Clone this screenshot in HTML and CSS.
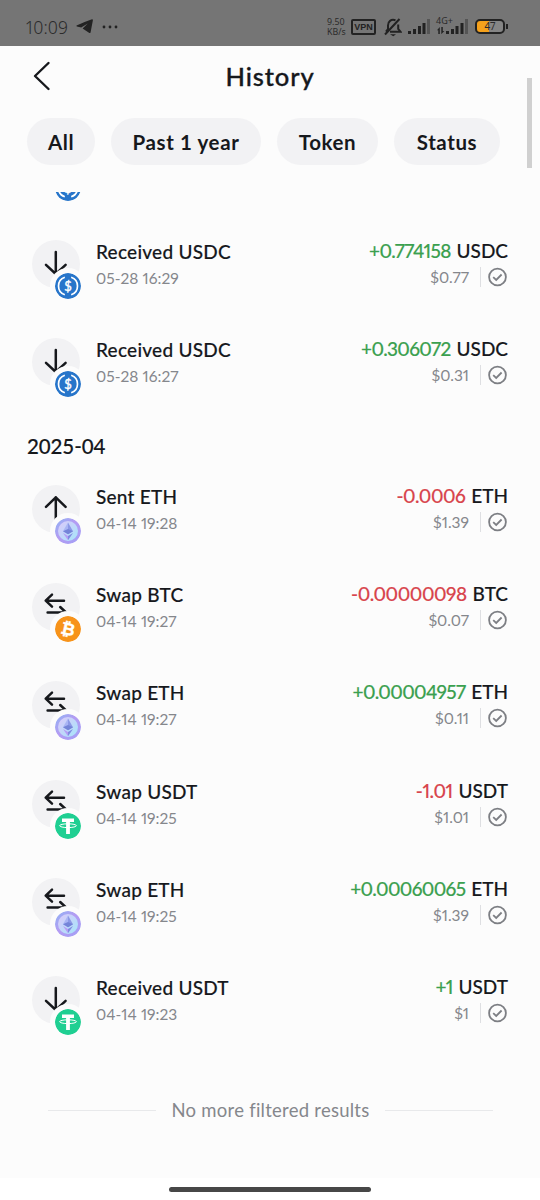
FILE: index.html
```
<!DOCTYPE html>
<html lang="en">
<head>
    <meta charset="UTF-8">
    <meta name="viewport" content="width=device-width, initial-scale=1.0">
    <title>History</title>
    <link rel="stylesheet" href="styles.css">
</head>
<body>

    <!-- Shared icons -->
    <svg class="sprite" width="0" height="0">
        <defs>
            <linearGradient id="ethRing" x1="0" y1="0" x2="1" y2="1">
                <stop offset="0" stop-color="#8fb4f4"/>
                <stop offset="0.45" stop-color="#b49cf3"/>
                <stop offset="1" stop-color="#a2a0f5"/>
            </linearGradient>
            <linearGradient id="ethFill" x1="0" y1="0" x2="1" y2="1">
                <stop offset="0" stop-color="#dcc8fa"/>
                <stop offset="1" stop-color="#a5e6fa"/>
            </linearGradient>
        </defs>
        <symbol id="receive" viewBox="0 0 48 48"><path d="M23.8 12v21.5M14 24.8l9.8 9.2 9.8-9.2"/></symbol>
        <symbol id="send" viewBox="0 0 48 48"><path d="M23.8 36V12.2M14 21.8l9.8-9.4 9.8 9.4"/></symbol>
        <symbol id="swap" viewBox="0 0 48 48"><path d="M32 17.7H13.8M20 11.7l-6.3 6 6.3 6M15.6 29.5H34L28.2 24"/></symbol>
        <symbol id="usdc" viewBox="0 0 26 26">
            <circle cx="13" cy="13" r="13" fill="#2775ca"/>
            <path d="M9.8 4.2a9.3 9.3 0 0 0 0 17.6M16.2 4.2a9.3 9.3 0 0 1 0 17.6" fill="none" stroke="#fff" stroke-width="1.7"/>
            <text x="13" y="17.6" class="coin-sign">$</text>
        </symbol>
        <symbol id="eth" viewBox="0 0 26 26">
            <circle cx="13" cy="13" r="13" fill="url(#ethRing)"/>
            <circle cx="13" cy="13" r="10" fill="url(#ethFill)"/>
            <path d="M13 4.5l-5 8.7 5 3z" fill="#a9b4f4"/>
            <path d="M13 4.5l5 8.7-5 3z" fill="#8c98e6"/>
            <path d="M8 13.2l5-2.2 5 2.2-5 3z" fill="#7484d8"/>
            <path d="M8 15l5 3v4.2z" fill="#b59df4"/>
            <path d="M18 15l-5 3v4.2z" fill="#7f8ae0"/>
        </symbol>
        <symbol id="btc" viewBox="0 0 26 26">
            <circle cx="13" cy="13" r="13" fill="#f7931a"/>
            <text x="13" y="19" class="coin-sign coin-btc" transform="rotate(13 13 13)">₿</text>
        </symbol>
        <symbol id="usdt" viewBox="0 0 26 26">
            <circle cx="13" cy="13" r="13" fill="#1fcf92"/>
            <path d="M7 5.6h12v3.5h-4.1v12h-3.8V9.1H7z" fill="#fff"/>
            <ellipse cx="13" cy="12.7" rx="8.4" ry="1.9" fill="none" stroke="#fff" stroke-width="1"/>
        </symbol>
        <symbol id="done" viewBox="0 0 20 20"><circle cx="10" cy="10" r="8.4"/><path d="M5.7 10.2l3 2.8 5.4-5.5"/></symbol>
    </svg>

    <div class="statusbar">
        <span class="clock">10:09</span>
        <svg class="telegram" width="18" height="15" viewBox="0 0 18 15"><path d="M0.6 6.6Q8 3 16 0.3Q17 0.2 16.9 1.2L14.6 13.2Q14.2 14.5 13 13.8L6.6 9.6 11.8 4.4 5.2 8.4 0.9 7.5Q0 7.1 0.6 6.6z"/></svg>
        <svg class="dots" width="16" height="4" viewBox="0 0 16 4"><circle cx="2" cy="2" r="1.4"/><circle cx="8" cy="2" r="1.4"/><circle cx="14" cy="2" r="1.4"/></svg>
        <div class="indicators">
            <div class="speed"><span>9.50</span><span>KB/s</span></div>
            <span class="vpn">VPN</span>
            <svg class="bell" width="18" height="20" viewBox="0 0 18 20">
                <path d="M11.5 3.3C7 1.8 4 4.5 4 8.5V12l-2 2.7M6 14.7h10.5L14.2 12V7.5M1 17.5L15.5 2" fill="none" stroke="#222" stroke-width="2"/>
                <path d="M6 17.2h6l-2.7 2z"/>
            </svg>
            <svg width="22" height="15" viewBox="0 0 22 15">
                <path d="M0 12h3v3H0zM5 10h3v5H5zM10 7h3v8h-3zM14.5 4h3v11h-3z"/><path class="faint" d="M19 0h3v15h-3z"/>
            </svg>
            <div class="network">
                <span class="net-label">4G+</span>
                <svg width="31" height="15" viewBox="0 0 31 15">
                    <path d="M0 11.2L2.8 8v7H1.3v-3.8zM4.3 8h1.5v4h1.5L4.3 15.2zM9 12h3v3H9zM14 10h3v5h-3zM18.5 7h3v8h-3zM23.5 4h3v11h-3z"/><path class="faint" d="M28 0h3v15h-3z"/>
                </svg>
            </div>
            <div class="battery"><span>47</span></div>
        </div>
    </div>

    <header class="header">
        <svg class="back" width="18" height="30" viewBox="0 0 18 30"><path d="M15.5 2L2 15 15.5 28"/></svg>
        <h1>History</h1>
    </header>

    <nav class="filters">
        <button class="chip chip-all">All</button>
        <button class="chip chip-period">Past 1 year</button>
        <button class="chip chip-token">Token</button>
        <button class="chip chip-status">Status</button>
    </nav>
    <div class="scrollbar"></div>

    <main class="list">
        <!-- Scrolled under the filters -->
        <div class="row row-cut">
            <div class="icon"><svg class="coin"><use href="#usdc"/></svg></div>
        </div>
        <div class="row">
            <div class="icon"><svg class="action"><use href="#receive"/></svg><svg class="coin"><use href="#usdc"/></svg></div>
            <div class="info"><div class="name">Received USDC</div><div class="date">05-28 16:29</div></div>
            <div class="amount"><div class="value"><span class="plus">+0.774158</span> USDC</div><div class="fiat">$0.77<svg class="done"><use href="#done"/></svg></div></div>
        </div>
        <div class="row">
            <div class="icon"><svg class="action"><use href="#receive"/></svg><svg class="coin"><use href="#usdc"/></svg></div>
            <div class="info"><div class="name">Received USDC</div><div class="date">05-28 16:27</div></div>
            <div class="amount"><div class="value"><span class="plus">+0.306072</span> USDC</div><div class="fiat">$0.31<svg class="done"><use href="#done"/></svg></div></div>
        </div>

        <h2 class="month">2025-04</h2>

        <div class="row">
            <div class="icon"><svg class="action"><use href="#send"/></svg><svg class="coin"><use href="#eth"/></svg></div>
            <div class="info"><div class="name">Sent ETH</div><div class="date">04-14 19:28</div></div>
            <div class="amount"><div class="value"><span class="minus">-0.0006</span> ETH</div><div class="fiat">$1.39<svg class="done"><use href="#done"/></svg></div></div>
        </div>
        <div class="row">
            <div class="icon"><svg class="action"><use href="#swap"/></svg><svg class="coin"><use href="#btc"/></svg></div>
            <div class="info"><div class="name">Swap BTC</div><div class="date">04-14 19:27</div></div>
            <div class="amount"><div class="value"><span class="minus">-0.00000098</span> BTC</div><div class="fiat">$0.07<svg class="done"><use href="#done"/></svg></div></div>
        </div>
        <div class="row">
            <div class="icon"><svg class="action"><use href="#swap"/></svg><svg class="coin"><use href="#eth"/></svg></div>
            <div class="info"><div class="name">Swap ETH</div><div class="date">04-14 19:27</div></div>
            <div class="amount"><div class="value"><span class="plus">+0.00004957</span> ETH</div><div class="fiat">$0.11<svg class="done"><use href="#done"/></svg></div></div>
        </div>
        <div class="row">
            <div class="icon"><svg class="action"><use href="#swap"/></svg><svg class="coin"><use href="#usdt"/></svg></div>
            <div class="info"><div class="name">Swap USDT</div><div class="date">04-14 19:25</div></div>
            <div class="amount"><div class="value"><span class="minus">-1.01</span> USDT</div><div class="fiat">$1.01<svg class="done"><use href="#done"/></svg></div></div>
        </div>
        <div class="row">
            <div class="icon"><svg class="action"><use href="#swap"/></svg><svg class="coin"><use href="#eth"/></svg></div>
            <div class="info"><div class="name">Swap ETH</div><div class="date">04-14 19:25</div></div>
            <div class="amount"><div class="value"><span class="plus">+0.00060065</span> ETH</div><div class="fiat">$1.39<svg class="done"><use href="#done"/></svg></div></div>
        </div>
        <div class="row">
            <div class="icon"><svg class="action"><use href="#receive"/></svg><svg class="coin"><use href="#usdt"/></svg></div>
            <div class="info"><div class="name">Received USDT</div><div class="date">04-14 19:23</div></div>
            <div class="amount"><div class="value"><span class="plus">+1</span> USDT</div><div class="fiat">$1<svg class="done"><use href="#done"/></svg></div></div>
        </div>

        <div class="end">No more filtered results</div>
    </main>

    <footer class="gesture"><span></span></footer>

</body>
</html>
```
FILE: styles.css
```
* {
    box-sizing: border-box;
}

body {
    margin: 0;
    width: 540px;
    height: 1200px;
    display: flex;
    flex-direction: column;
    background-color: #fcfcfc;
    color: #16181c;
    font-family: Lato, "Liberation Sans", sans-serif;
    font-variant-numeric: proportional-nums;
    position: relative;
    overflow: hidden;
}

.sprite {
    position: absolute;
}

/* System status bar */
.statusbar {
    height: 46px;
    flex: none;
    display: flex;
    align-items: center;
    padding: 7px 34px 0 26px;
    background-color: #757575;
    color: #2b2b2b;
    fill: #222;
    font-family: "Noto Sans", sans-serif;
}

.clock {
    font-size: 17.5px;
    font-weight: 300;
    width: 50px;
    letter-spacing: 0.1px;
}

.dots {
    margin-left: 8px;
}

.indicators {
    display: flex;
    align-items: center;
    margin-left: auto;
}

.speed {
    display: flex;
    flex-direction: column;
    font-size: 8.8px;
    line-height: 10px;
    width: 24px;
}

.vpn {
    width: 25px;
    height: 16px;
    border: 2px solid #222;
    border-radius: 2px;
    font: bold 9px/12px "Liberation Sans", sans-serif;
    text-align: center;
    color: #222;
}

.bell {
    margin: 0 6px 0 8px;
}

.faint {
    fill: #555;
}

.network {
    position: relative;
    height: 15px;
    margin-left: 7px;
    display: flex;
}

.net-label {
    position: absolute;
    left: -1px;
    top: -3px;
    font-size: 9px;
    line-height: 10px;
}

.battery {
    width: 30px;
    height: 15px;
    margin: 0 1px 0 7px;
    border: 2px solid #222;
    border-radius: 5px;
    background: linear-gradient(90deg, #f5a11c 45%, #858585 45%);
    font-size: 10px;
    line-height: 11px;
    text-align: center;
    position: relative;
}

.battery::after {
    content: "";
    position: absolute;
    right: -5px;
    top: 3px;
    width: 2px;
    height: 5px;
    background-color: #222;
}

/* Header and filters */
.header {
    height: 72px;
    flex: none;
    display: flex;
    align-items: center;
    padding: 0 33px 13px;
}

.back {
    fill: none;
    stroke: #16181c;
    stroke-width: 2.4;
    stroke-linecap: round;
    stroke-linejoin: round;
}

h1 {
    margin: 0;
    flex: 1;
    padding-right: 18px;
    text-align: center;
    font-size: 25.5px;
    line-height: 30px;
    font-weight: 500;
    letter-spacing: 0.9px;
    -webkit-text-stroke: 0.35px;
}

.filters {
    height: 74px;
    flex: none;
    display: flex;
    align-items: flex-start;
    gap: 16px;
    padding-left: 27px;
}

.chip {
    height: 47px;
    border: none;
    border-radius: 24px;
    padding: 0;
    background-color: #f2f2f4;
    color: #16181c;
    font: bold 20.5px Lato, sans-serif;
    letter-spacing: 0.6px;
}

.chip-all {
    width: 68px;
}

.chip-period {
    width: 150px;
}

.chip-token {
    width: 101px;
}

.chip-status {
    width: 106px;
}

.scrollbar {
    position: absolute;
    left: 527px;
    top: 78px;
    width: 5px;
    height: 90px;
    background-color: #d0d0d0;
}

/* Transactions */
.list {
    flex: 1;
    overflow: hidden;
}

.row {
    height: 98.2px;
    display: flex;
    padding: 0 32px;
}

.row-cut {
    margin-top: -50.2px;
}

.icon {
    position: relative;
    width: 48px;
    height: 48px;
    border-radius: 50%;
    background-color: #f2f2f4;
}

.row-cut .icon {
    background: none;
}

.action {
    display: block;
    width: 48px;
    height: 48px;
    fill: none;
    stroke: #16181c;
    stroke-width: 2.5;
    stroke-linecap: round;
    stroke-linejoin: round;
}

.coin {
    position: absolute;
    left: 18px;
    top: 28px;
    width: 36px;
    height: 36px;
    padding: 5px;
    border-radius: 50%;
    background-color: #fcfcfc;
}

.coin-sign {
    font: 13px Lato, sans-serif;
    fill: #fff;
    stroke: #fff;
    stroke-width: 0.4;
    text-anchor: middle;
}

.coin-btc {
    font: bold 17px "DejaVu Sans", sans-serif;
}

.info {
    margin-top: -1px;
    margin-left: 16px;
}

.name,
.value {
    font-size: 19px;
    line-height: 25px;
    font-weight: 500;
    letter-spacing: 0.25px;
    white-space: nowrap;
    -webkit-text-stroke: 0.15px;
}

.date,
.fiat {
    font-size: 15.5px;
    line-height: 20px;
    color: #85878c;
}

.date {
    margin-top: 4px;
    letter-spacing: 0.05px;
}

.amount {
    margin-left: auto;
    margin-top: -2px;
    text-align: right;
}

.value {
    letter-spacing: 0;
}

.plus {
    color: #3ba04f;
    letter-spacing: -0.65px;
    margin-right: 1px;
}

.minus {
    color: #d8444c;
    letter-spacing: -0.45px;
    margin-right: 1px;
}

.fiat {
    display: flex;
    justify-content: flex-end;
    align-items: center;
    margin-top: 4px;
}

.done {
    width: 28px;
    height: 20px;
    margin-left: 11px;
    padding-left: 6px;
    border-left: 1px solid #dedfe2;
    fill: none;
    stroke: #7d7f84;
    stroke-width: 1.8;
}

.month {
    height: 48.6px;
    margin: 0;
    padding-left: 27px;
    font-size: 20.5px;
    line-height: 21px;
    font-weight: 500;
    font-variant-numeric: tabular-nums;
    letter-spacing: -0.1px;
    -webkit-text-stroke: 0.15px;
}

.end {
    display: flex;
    align-items: center;
    gap: 16px;
    margin: 24px 47px 0 48px;
    font-size: 18.5px;
    line-height: 24px;
    letter-spacing: 0.25px;
    color: #85878c;
}

.end::before,
.end::after {
    content: "";
    flex: 1;
    height: 1px;
    background-color: #e8e9eb;
}

/* Gesture bar */
.gesture {
    height: 22px;
    flex: none;
    display: flex;
    justify-content: center;
    align-items: center;
    background-color: #fff;
}

.gesture span {
    width: 202px;
    height: 5px;
    border-radius: 3px;
    background-color: #474747;
}
```
